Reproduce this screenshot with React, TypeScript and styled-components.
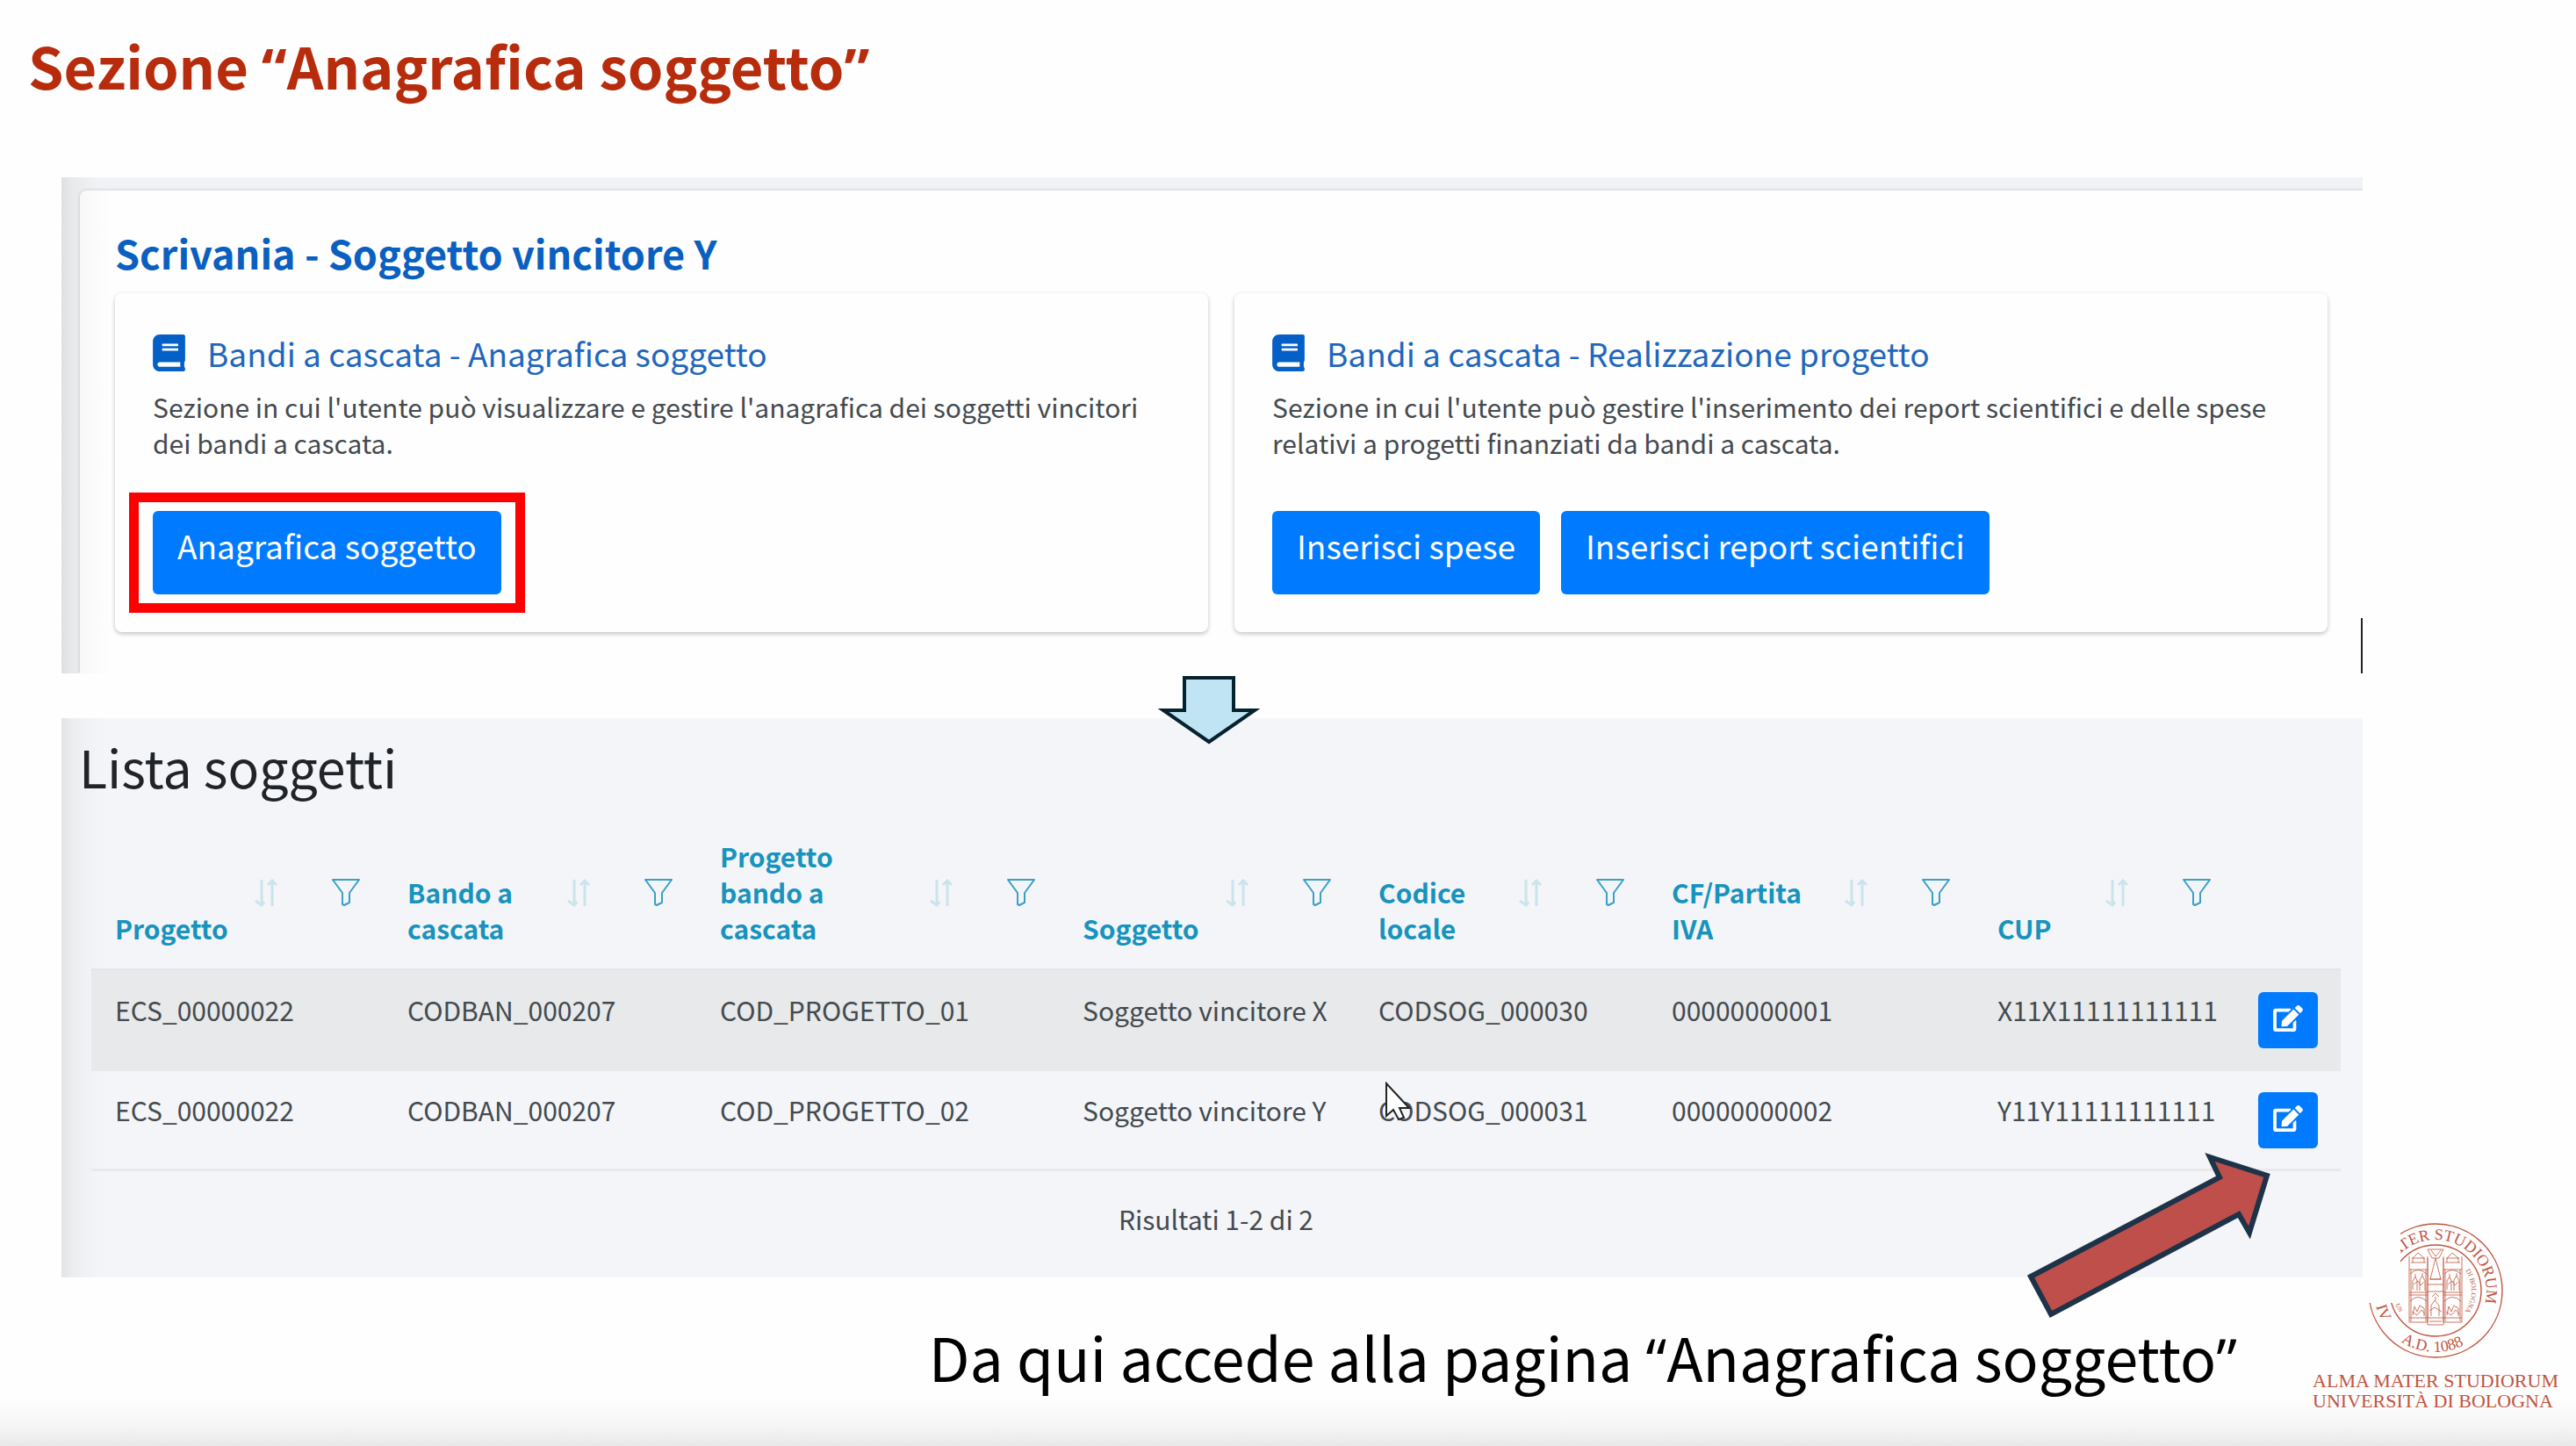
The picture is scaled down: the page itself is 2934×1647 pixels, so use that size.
import React from "react";
import styled, { createGlobalStyle } from "styled-components";
import { FaBook, FaEdit } from "react-icons/fa";

const GlobalStyle = createGlobalStyle`
  *, *::before, *::after { box-sizing: border-box; }
  body {
    margin: 0;
    background: #fefefe;
    color: #444a4f;
    font-family: "Noto Sans CJK SC", "Open Sans", sans-serif;
    font-size: 30px;
    line-height: 41px;
  }
  h1, h2, h3, p { margin: 0; }
  button { font: inherit; border: 0; cursor: pointer; }
`;

const Slide = styled.div`
  position: relative;
  min-height: 100vh;
  padding: 34px 243px 0 70px;
  background: linear-gradient(to top, #e8e8e8 0, #f6f6f6 24px, #fefefe 56px);
`;

const SlideTitle = styled.h1`
  margin: 0 0 88px -38px;
  font-size: 65px;
  line-height: 80px;
  font-weight: 700;
  color: #b72c0c;
`;

const QuoteMark = styled.span`
  font-family: "Open Sans", sans-serif;
  line-height: 1;
`;

const DeskPanel = styled.section`
  position: relative;
  padding: 15px 0 0 21px;
  background: linear-gradient(to right, #e0e0e1 0, #e9eaeb 14px, #f1f2f5 40px);
`;

const DeskSheet = styled.div`
  padding: 45px 40px 47px;
  border-top-left-radius: 8px;
  background: linear-gradient(to right, #f8f8f8 0, #fefefe 36px);
  box-shadow: 0 0 4px rgba(0, 0, 0, 0.18);
  clip-path: inset(-4px 0 0 -4px);
`;

const DeskTitle = styled.h2`
  margin-bottom: 20px;
  font-size: 45px;
  line-height: 52px;
  font-weight: 700;
  color: #0a60c0;
`;

const CardGrid = styled.div`
  display: grid;
  grid-template-columns: 1fr 1fr;
  gap: 30px;
`;

const Card = styled.article`
  padding: 46px 43px 43px;
  border-radius: 8px;
  background: #fefefe;
  box-shadow: 0 2px 5px rgba(0, 0, 0, 0.24);
`;

const CardTitle = styled.h3`
  display: flex;
  align-items: center;
  gap: 25px;
  margin-bottom: 19px;
  font-size: 37px;
  line-height: 44px;
  font-weight: 400;
  color: #1f67bd;
  svg { flex: none; width: 37px; height: 42px; color: #0460c6; }
`;

const Actions = styled.div`
  display: flex;
  gap: 24px;
  margin-top: 57px;
`;

const ActionButton = styled.button<{ $marked?: boolean }>`
  position: relative;
  padding: 17px 28px 34px;
  border-radius: 6px;
  background: #007aff;
  color: #fff;
  font-size: 37px;
  line-height: 44px;
  &::after {
    content: "";
    display: ${(p) => (p.$marked ? "block" : "none")};
    position: absolute;
    inset: -21px -27px;
    border: 11px solid #fe0000;
  }
`;

const TextCaret = styled.span`
  position: absolute;
  right: 0;
  bottom: 0;
  width: 2px;
  height: 63px;
  background: #222;
`;

const ListPanel = styled.section`
  position: relative;
  margin-top: 51px;
  padding: 20px 25px 46px 34px;
  background: linear-gradient(to right, #e2e3e5 0, #eceef0 14px, #f3f5f9 44px);
`;

const ListTitle = styled.h2`
  margin: 0 0 20px -14px;
  font-size: 59px;
  line-height: 70px;
  font-weight: 400;
  color: #202428;
`;

const Table = styled.table`
  width: 100%;
  table-layout: fixed;
  border-collapse: separate;
  border-spacing: 0;
`;

const HeadCell = styled.th`
  padding: 27px 27px 25px;
  border-bottom: 3px solid #e4e6e8;
  vertical-align: bottom;
  text-align: left;
  font-weight: 700;
  color: #1793bd;
`;

const HeadInner = styled.div`
  display: flex;
  align-items: center;
  height: 123px;
`;

const HeadLabel = styled.span`
  flex: 1;
  align-self: flex-end;
  padding-right: 24px;
`;

const IconButton = styled.button`
  display: flex;
  padding: 0;
  background: none;
  & + & { margin-left: 62px; }
`;

const BodyRow = styled.tr<{ $striped?: boolean }>`
  background: ${(p) => (p.$striped ? "#e7e9ea" : "transparent")};
`;

const Cell = styled.td`
  height: 114px;
  padding: 24px 27px 23px;
  border-bottom: 3px solid #e7e9ed;
  vertical-align: top;
  white-space: nowrap;
`;

const EditButton = styled.button`
  display: flex;
  align-items: center;
  justify-content: center;
  width: 68px;
  height: 64px;
  padding: 0 0 4px;
  border-radius: 6px;
  background: #007aff;
  color: #fff;
  svg { width: 34px; height: 30px; }
`;

const Results = styled.p`
  margin-top: 34px;
  text-align: center;
`;

const Caption = styled.p`
  margin-top: 50px;
  padding-right: 143px;
  text-align: right;
  font-size: 68px;
  line-height: 80px;
  color: #000;
`;

const DownArrow = styled.svg`
  position: absolute;
  top: -51px;
  left: 1246px;
`;

const Pointer = styled.svg`
  position: absolute;
  top: 414px;
  left: 1507px;
`;

const RedArrow = styled.svg`
  position: absolute;
  right: 100px;
  bottom: -50px;
`;

const Brand = styled.div`
  position: absolute;
  right: 20px;
  bottom: 40px;
  display: flex;
  flex-direction: column;
  align-items: center;
  gap: 14px;
  color: #c0553f;
  font-family: "Liberation Serif", serif;
  font-size: 22px;
  line-height: 23px;
  white-space: nowrap;
`;

const BrandName = styled.div`
  display: flex;
  flex-direction: column;
`;

const SortIcon = () => (
  <svg width="26" height="32" viewBox="0 0 26 32" fill="none" stroke="#cbe4ec" strokeWidth="3">
    <path d="M8 1V28M1 25L8 30L11 26" />
    <path d="M20 31V4M25 7L20 2L15 7" />
  </svg>
);

const FilterIcon = () => (
  <svg width="32" height="32" viewBox="0 0 32 32" fill="none" stroke="#3aa0c6" strokeWidth="2" strokeLinejoin="round">
    <path d="M1 1H31L20 16V27L14 30L12 29V16Z" />
  </svg>
);

const Tower = ({ x }: { x: number }) => (
  <g transform={`translate(${x} 0)`}>
    <path d="M0 38V113H21V38M0 53H21M0 79H21M0 82H21M0 108H21M2 45H19M4 45V40L10 34L17 40V45M3 40H18M2 53V112M19 53V112" />
    <path d="M1 58Q10 49 20 58M1 89Q10 80 20 89" />
    <path d="M4 76V66L7 61L9 66V77M12 77V65L15 60L18 66V77M5 70L10 66L13 71L17 67M4 105L6 95L9 101L12 94L17 97V106M3 101L9 105L14 99L18 104M7 61V58M15 60V57" />
  </g>
);

const Seal = () => (
  <svg width="154" height="154" viewBox="0 0 154 154" fill="none" stroke="#c0553f" strokeWidth="1">
    <defs>
      <clipPath id="sealCut">
        <path d="M37 0H154V154H0V91H37Z" />
      </clipPath>
      <path id="arcTop" d="M19 77A58 58 0 0 1 135 77A58 58 0 0 1 77 135" />
      <path id="arcBottom" d="M7 77A70 70 0 0 0 147 77" />
      <path id="arcInner" d="M77 36A41 41 0 0 1 77 118" />
      <path id="arcInnerLeft" d="M29 77A48 48 0 0 0 77 125" />
    </defs>
    <g clipPath="url(#sealCut)">
      <circle cx="77" cy="77" r="76" strokeWidth="1.4" />
      <circle cx="77" cy="77" r="52" strokeWidth="1.4" />
      <g fill="#c0553f" stroke="none" fontFamily="Liberation Serif, serif">
        <text fontSize="18">
          <textPath href="#arcTop" startOffset="40">ATER STUDIORUM</textPath>
        </text>
        <text fontSize="18">
          <textPath href="#arcBottom" startOffset="18">IV</textPath>
        </text>
        <text fontSize="18">
          <textPath href="#arcBottom" startOffset="68">A.D. 1088</textPath>
        </text>
        <text fontSize="8">
          <textPath href="#arcInner" startOffset="40">DI BOLOGNA</textPath>
        </text>
        <text fontSize="7">
          <textPath href="#arcInnerLeft" startOffset="16">UN</textPath>
        </text>
      </g>
      <g strokeWidth="0.8">
        <Tower x={47} />
        <Tower x={86} />
        <path d="M68 40V116H86V40M68 30H86L81 40H73ZM72 31L77 38L83 31M77 40L71 64H83L77 40M70 64H84M68 70H86M68 78H86M68 108H86M70 112H84" />
        <path d="M72 106V94L76 88L81 94V106M70 100L76 96L84 101M73 84L77 80L81 84M77 88V84" />
      </g>
    </g>
  </svg>
);

const columns = [
  { label: "Progetto", width: 333 },
  { label: "Bando a cascata", width: 356 },
  { label: "Progetto bando a cascata", width: 413 },
  { label: "Soggetto", width: 337 },
  { label: "Codice locale", width: 334 },
  { label: "CF/Partita IVA", width: 371 },
  { label: "CUP", width: 297 },
];

const rows = [
  ["ECS_00000022", "CODBAN_000207", "COD_PROGETTO_01", "Soggetto vincitore X", "CODSOG_000030", "00000000001", "X11X11111111111"],
  ["ECS_00000022", "CODBAN_000207", "COD_PROGETTO_02", "Soggetto vincitore Y", "CODSOG_000031", "00000000002", "Y11Y11111111111"],
];

export default function App() {
  return (
    <>
      <GlobalStyle />
      <Slide>
        <SlideTitle>
          Sezione <QuoteMark>“</QuoteMark>Anagrafica soggetto<QuoteMark>”</QuoteMark>
        </SlideTitle>

        <DeskPanel>
          <DeskSheet>
            <DeskTitle>Scrivania - Soggetto vincitore Y</DeskTitle>
            <CardGrid>
              <Card>
                <CardTitle><FaBook />Bandi a cascata - Anagrafica soggetto</CardTitle>
                <p>
                  Sezione in cui l'utente può visualizzare e gestire l'anagrafica dei soggetti vincitori
                  dei bandi a cascata.
                </p>
                <Actions>
                  <ActionButton $marked>Anagrafica soggetto</ActionButton>
                </Actions>
              </Card>
              <Card>
                <CardTitle><FaBook />Bandi a cascata - Realizzazione progetto</CardTitle>
                <p>
                  Sezione in cui l'utente può gestire l'inserimento dei report scientifici e delle spese
                  relativi a progetti finanziati da bandi a cascata.
                </p>
                <Actions>
                  <ActionButton>Inserisci spese</ActionButton>
                  <ActionButton>Inserisci report scientifici</ActionButton>
                </Actions>
              </Card>
            </CardGrid>
          </DeskSheet>
          <TextCaret />
        </DeskPanel>

        <ListPanel>
          <ListTitle>Lista soggetti</ListTitle>
          <Table>
            <colgroup>
              {columns.map((c) => <col key={c.label} style={{ width: c.width }} />)}
              <col />
            </colgroup>
            <thead>
              <tr>
                {columns.map((c) => (
                  <HeadCell key={c.label} scope="col">
                    <HeadInner>
                      <HeadLabel>{c.label}</HeadLabel>
                      <IconButton aria-label={`Ordina per ${c.label}`}><SortIcon /></IconButton>
                      <IconButton aria-label={`Filtra per ${c.label}`}><FilterIcon /></IconButton>
                    </HeadInner>
                  </HeadCell>
                ))}
                <HeadCell />
              </tr>
            </thead>
            <tbody>
              {rows.map((row, i) => (
                <BodyRow key={row[2]} $striped={i % 2 === 0}>
                  {row.map((value, j) => <Cell key={j}>{value}</Cell>)}
                  <Cell>
                    <EditButton aria-label="Modifica soggetto"><FaEdit /></EditButton>
                  </Cell>
                </BodyRow>
              ))}
            </tbody>
          </Table>
          <Results>Risultati 1-2 di 2</Results>

          <DownArrow width="124" height="84" viewBox="0 0 124 84">
            <path d="M33 5H89V42H113L61 78L9 42H33Z" fill="#c0e4f3" stroke="#06222f" strokeWidth="4" />
          </DownArrow>
          <Pointer width="32" height="46" viewBox="0 0 32 46">
            <path d="M2 2V39L10 32L16 43L22 41L17 30H28Z" fill="#fff" stroke="#222" strokeWidth="2" />
          </Pointer>
          <RedArrow width="290" height="200" viewBox="0 0 290 200">
            <path d="M12 149L227 36L216 13L281 34L261 99L249 78L35 192Z" fill="#bf4f4a" stroke="#1d3348" strokeWidth="6" />
          </RedArrow>
        </ListPanel>

        <Caption>
          Da qui accede alla pagina <QuoteMark>“</QuoteMark>Anagrafica soggetto<QuoteMark>”</QuoteMark>
        </Caption>

        <Brand>
          <Seal />
          <BrandName>
            <span>ALMA MATER STUDIORUM</span>
            <span>UNIVERSITÀ DI BOLOGNA</span>
          </BrandName>
        </Brand>
      </Slide>
    </>
  );
}
